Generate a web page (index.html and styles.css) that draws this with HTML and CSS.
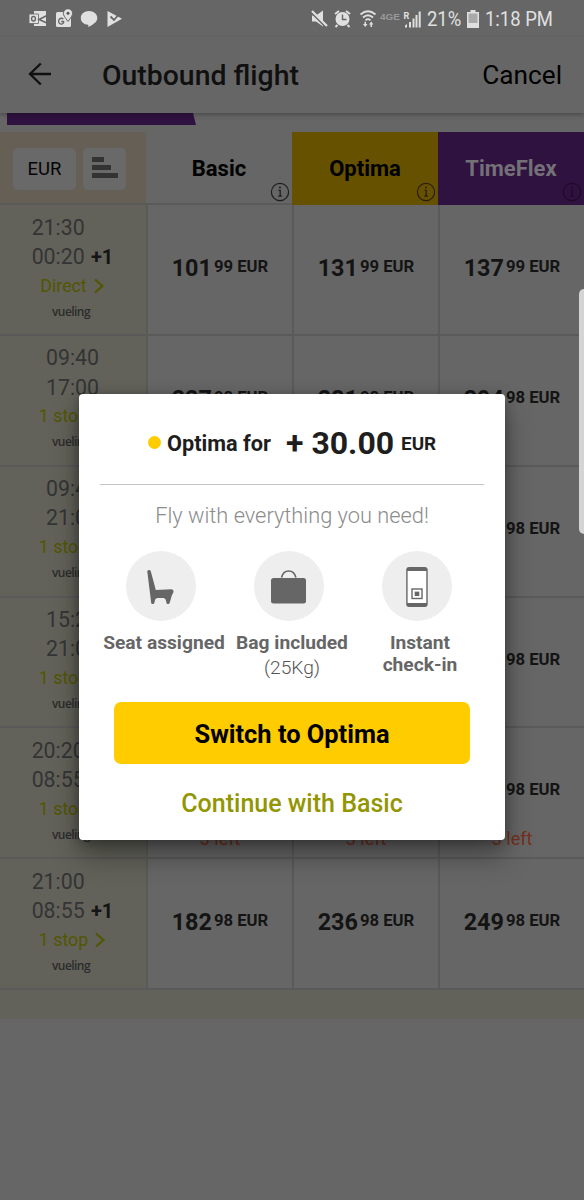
FILE: index.html
```html
<!DOCTYPE html>
<html lang="en">
<head>
<meta charset="utf-8">
<title>Outbound flight</title>
<link rel="stylesheet" href="styles.css">
</head>
<body>
<svg class="defs" aria-hidden="true">
  <symbol id="info" viewBox="0 0 20 20"><circle cx="10" cy="10" r="8.600" fill="none" stroke="currentColor" stroke-width="1.200"/><path d="M8.500 8.300h1.700v6M8.300 14.200h3.600" fill="none" stroke="currentColor" stroke-width="1.300"/><circle cx="10" cy="5.600" r="1" fill="currentColor"/></symbol>
  <symbol id="chev" viewBox="0 0 12 16"><path d="M2 1.500l7.400 6.500L2 14.500" fill="none" stroke="currentColor" stroke-width="2.300"/></symbol>
</svg>
<div class="screen">
  <div class="status">
    <svg class="status-left" width="96" height="20" viewBox="28 7 96 20" fill="#e0e0e0">
      <path d="M34 9h12v15H34z"/><path d="M29 12h9.500v9.500H29z" stroke="#666" stroke-width=".8"/><ellipse cx="33.500" cy="16.700" rx="1.900" ry="2.300" fill="none" stroke="#666" stroke-width="1.400"/><path d="M48 13l-9 4.500 9 4" fill="none" stroke="#666" stroke-width="1.500"/>
      <rect x="56" y="10" width="15" height="15" rx="1.500"/><path d="M63.300 17.200a2.700 2.900 0 1 0 .3 3.500v-1.200h-2.400" fill="none" stroke="#666" stroke-width="1.300"/><path d="M68 19.500c-3-4-4.600-6-4.600-8.200a4.600 4.600 0 0 1 9.200 0c0 2.200-1.600 4.200-4.600 8.200z" stroke="#666" stroke-width="1"/><circle cx="68" cy="11.300" r="1.500" fill="#555"/>
      <path d="M89 9c4.800 0 8.300 3.100 8.300 7 0 3.500-3.200 6.200-9 9v-2.200c-4.500-.2-7.500-3-7.500-6.800 0-3.900 3.400-7 8.200-7z"/>
      <path d="M107.500 9l14.500 7.700-14.500 8.300z"/><path d="M110.500 14.500l3.500 3.500 6-7" fill="none" stroke="#666" stroke-width="1.800"/>
    </svg>
    <svg class="status-right" width="113" height="20" viewBox="310 7 113 20" fill="#e0e0e0">
      <path d="M312 13.500h4l7-5v16l-7-5h-4z"/><path d="M310.500 9l16 16" stroke="#666" stroke-width="3"/><path d="M312 9l15 15" stroke="#e0e0e0" stroke-width="2.200"/>
      <circle cx="342.500" cy="17" r="7"/><path d="M335 12l4-3M350 12l-4-3M337.500 23l-2 2M347.500 23l2 2" stroke="#e0e0e0" stroke-width="2"/><path d="M342.500 12.500v5h4" fill="none" stroke="#666" stroke-width="1.400"/>
      <g fill="none" stroke="#e0e0e0" stroke-width="1.700"><path d="M360.500 12.500q7.500-6.500 15 0M363 15.500q5-4.500 10 0M365.500 18.300q2.500-2.400 5 0"/></g><path d="M363 22h1.500v-2.200h1.500V22h1.500l-2.200 3zM369 22.500l2.200-3 2.200 3H372V25h-1.500v-2.500z"/>
      <text x="380" y="18" class="net" textLength="20" lengthAdjust="spacingAndGlyphs">4GE</text>
      <text x="403.500" y="16.500" class="roam">R</text>
      <path d="M405 23.500l2-1.500v3.500h-2zM409 20h2v5.500h-2zM412.500 16.500h2v9h-2zM415.500 13h2v12.500h-2zM418.700 9.500h2v16h-2z"/>
    </svg>
    <span class="pct">21%</span>
    <svg class="batt" width="12" height="18" viewBox="0 0 12 18"><path d="M3.500 0h5v2H12v16H0V2h3.500z" fill="#e0e0e0"/><path d="M1.500 3.500h9v9.500h-9z" fill="#aaa"/></svg>
    <span class="clock">1:18 PM</span>
  </div>
  <div class="appbar">
    <svg class="back" width="24" height="24" viewBox="0 0 24 24"><path d="M12.800 1.500L2 12l10.800 10.500M2 12h21" fill="none" stroke="#101010" stroke-width="2.300"/></svg>
    <h1>Outbound flight</h1>
    <span class="cancel">Cancel</span>
  </div>
  <div class="progress"><div class="done"></div></div>
  <div class="heads">
    <div class="tools"><span class="cur">EUR</span><span class="sort"><i></i><i></i><i></i></span></div>
    <div class="head">Basic<svg class="info"><use href="#info"/></svg></div>
    <div class="head optima">Optima<svg class="info"><use href="#info"/></svg></div>
    <div class="head flex">TimeFlex<svg class="info"><use href="#info"/></svg></div>
  </div>
  <div class="rows">
    <div class="row">
      <div class="time"><div class="hours">21:30<br>00:20 <b>+1</b></div><div class="stop">Direct<svg><use href="#chev"/></svg></div><div class="brand">vueling<i></i></div></div>
      <div class="price">101<sup>99 EUR</sup></div><div class="price">131<sup>99 EUR</sup></div><div class="price">137<sup>99 EUR</sup></div>
    </div>
    <div class="row">
      <div class="time"><div class="hours">09:40<br>17:00</div><div class="stop">1 stop<svg><use href="#chev"/></svg></div><div class="brand">vueling<i></i></div></div>
      <div class="price">227<sup>98 EUR</sup></div><div class="price">281<sup>98 EUR</sup></div><div class="price">294<sup>98 EUR</sup></div>
    </div>
    <div class="row">
      <div class="time"><div class="hours">09:40<br>21:00</div><div class="stop">1 stop<svg><use href="#chev"/></svg></div><div class="brand">vueling<i></i></div></div>
      <div class="price">227<sup>98 EUR</sup></div><div class="price">281<sup>98 EUR</sup></div><div class="price">294<sup>98 EUR</sup></div>
    </div>
    <div class="row">
      <div class="time"><div class="hours">15:20<br>21:00</div><div class="stop">1 stop<svg><use href="#chev"/></svg></div><div class="brand">vueling<i></i></div></div>
      <div class="price">227<sup>98 EUR</sup></div><div class="price">281<sup>98 EUR</sup></div><div class="price">294<sup>98 EUR</sup></div>
    </div>
    <div class="row">
      <div class="time"><div class="hours">20:20<br>08:55 <b>+1</b></div><div class="stop">1 stop<svg><use href="#chev"/></svg></div><div class="brand">vueling<i></i></div></div>
      <div class="price">182<sup>98 EUR</sup><em>3 left</em></div><div class="price">236<sup>98 EUR</sup><em>3 left</em></div><div class="price">249<sup>98 EUR</sup><em>3 left</em></div>
    </div>
    <div class="row">
      <div class="time"><div class="hours">21:00<br>08:55 <b>+1</b></div><div class="stop">1 stop<svg><use href="#chev"/></svg></div><div class="brand">vueling<i></i></div></div>
      <div class="price">182<sup>98 EUR</sup></div><div class="price">236<sup>98 EUR</sup></div><div class="price">249<sup>98 EUR</sup></div>
    </div>
  </div>
  <div class="foot"></div>
  <div class="edge"></div>

  <div class="modal">
    <div class="offer"><i class="dot"></i><span class="what">Optima for</span><span class="amount">+ 30.00</span><span class="unit">EUR</span></div>
    <p class="tag"><span>Fly with everything you need!</span></p>
    <div class="perks">
      <div class="perk">
        <svg class="disc" viewBox="0 0 70 70"><circle cx="35" cy="35" r="35" fill="#eee"/><path d="M21.300 20.500Q21.200 19.200 22.800 18.900Q24.300 18.700 24.800 20.300L29.800 39L45.500 38.300Q48.200 38.800 47.300 41.500L45.800 44.500L43.600 52Q43.300 53 42.300 53H41.500Q40.700 53 40.600 52L39.600 48.600Q38.800 47 37.500 47H31.500Q29.700 47 29.200 48.600L28.300 52Q28 53 27 53H26.200Q25.300 53 25.200 52Z" fill="#666"/></svg>
        <strong>Seat assigned</strong>
      </div>
      <div class="perk">
        <svg class="disc" viewBox="0 0 70 70"><circle cx="35" cy="35" r="35" fill="#eee"/><rect x="17" y="27" width="35" height="25.500" rx="2.500" fill="#666"/><path d="M27.500 26.500c1-4 4-6.500 7.200-6.500s6.200 2.500 7.200 6.500" fill="none" stroke="#666" stroke-width="1.700"/></svg>
        <strong>Bag included</strong><span class="note">(25Kg)</span>
      </div>
      <div class="perk">
        <svg class="disc" viewBox="0 0 70 70"><circle cx="35" cy="35" r="35" fill="#eee"/><rect x="24.200" y="16" width="21.500" height="40" rx="3" fill="#666"/><path d="M25.600 20h18.700v32H25.600z" fill="#fff"/><rect x="30" y="38" width="10" height="9.500" fill="none" stroke="#666" stroke-width="1.400"/><path d="M32.700 40.600h4.600v4.400h-4.600z" fill="#666"/></svg>
        <strong>Instant<br>check-in</strong>
      </div>
    </div>
    <div class="switch"><span>Switch to Optima</span></div>
    <div class="cont"><span>Continue with Basic</span></div>
  </div>
</div>
</body>
</html>
```
FILE: styles.css
```css
* { box-sizing: border-box; }
body { margin: 0; font-family: Roboto, "Liberation Sans", sans-serif; }
.defs { position: absolute; width: 0; height: 0; }
.screen { position: relative; width: 584px; height: 1200px; overflow: hidden; background: #666; display: flex; flex-direction: column; }
svg { display: block; flex: none; }

.status { height: 37px; display: flex; align-items: center; padding-left: 28px; color: #e0e0e0; font-size: 20.5px; flex: none; }
.status-right { margin-left: 186px; }
.net { font: 700 9px "Liberation Sans", sans-serif; fill: #999; }
.roam { font: 700 9px Roboto, sans-serif; }
.pct, .clock { transform: scaleX(.9); transform-origin: 0 50%; white-space: nowrap; }
.pct { width: 44px; margin-left: 4px; }
.batt { margin-left: -4px; }
.clock { margin-left: 6px; }

.appbar { height: 76px; flex: none; display: flex; align-items: center; padding: 0 22px 0 28px; color: #101010; box-shadow: 0 2px 4px rgba(0,0,0,.25); position: relative; z-index: 1; }
.back { margin-bottom: 2px; }
.appbar h1 { margin: 0 0 0 50px; font-size: 28.4px; font-weight: 500; }
.cancel { margin-left: auto; font-size: 26.2px; color: #000; }
.progress { height: 19px; padding-left: 7px; flex: none; }
.done { width: 189px; height: 12px; background: #2f123f; clip-path: polygon(0 0, 186px 0, 100% 100%, 0 100%); }

.heads { height: 71px; flex: none; display: grid; grid-template-columns: 146px 146px 146px 146px; }
.tools { background: #655f55; display: flex; align-items: center; gap: 7px; padding-left: 13px; }
.cur, .sort { height: 42px; background: #696969; border-radius: 5px; }
.cur { width: 63px; font-size: 18.500px; line-height: 42px; text-align: center; color: #050505; }
.sort { width: 43px; padding: 9px 0 0 9px; display: flex; flex-direction: column; gap: 3px; }
.sort i { height: 5px; background: #333; }
.sort i:nth-child(1) { width: 12px; }
.sort i:nth-child(2) { width: 19px; }
.sort i:nth-child(3) { width: 26px; }
.head { position: relative; font-size: 22px; font-weight: 700; color: #000; text-align: center; line-height: 73px; }
.info { position: absolute; right: 2px; bottom: 3px; width: 20px; height: 20px; color: #1e1e1e; }
.optima { background: #665100; }
.optima .info { color: #2b1c14; }
.flex { background: #2f123f; color: #747078; }
.flex .info { color: #1d0c29; }

.rows { display: grid; grid-auto-rows: 130.850px; flex: none; }
.row { display: grid; grid-template-columns: 146px 146px 146px 146px; border-top: 2px solid #5a5a5a; }
.time { background: #62625a; display: flex; flex-direction: column; align-items: center; padding-top: 7.500px; }
.hours { font-size: 21.300px; line-height: 29.300px; color: #343434; font-weight: 400; white-space: nowrap; margin-right: 1px; }
.hours b { color: #151515; font-size: 20px; font-weight: 700; margin-left: 1px; }
.stop { display: flex; align-items: center; gap: 6px; height: 27px; font-size: 17.800px; color: #535600; margin-right: 1px; }
.stop svg { width: 12px; height: 16px; }
.brand { position: relative; font: 600 12px/26px "Open Sans", sans-serif; color: #2c2c2c; letter-spacing: -.55px; margin-right: 4px; }
.brand i { position: absolute; right: -3px; top: 7px; width: 1px; height: 2px; background: #7a5f10; }
.price { position: relative; border-left: 2px solid #5a5a5a; display: flex; justify-content: center; align-items: flex-start; padding-top: 48px; font-size: 23.400px; line-height: 31px; font-weight: 700; color: #141414; }
.price sup { font-size: 16.700px; line-height: 28px; vertical-align: baseline; margin-left: 2px; white-space: nowrap; }
.price em { position: absolute; top: 95px; left: 0; width: 100%; text-align: center; font: 400 18px/31px Roboto, sans-serif; color: #74301c; }
.foot { height: 31px; flex: none; background: #62625a; border-top: 2px solid #5a5a5a; }
.edge { position: absolute; left: 579px; top: 289px; width: 10px; height: 245px; border-radius: 6px; background: #d4d4d4; }

.modal { position: absolute; z-index: 2; left: 79px; top: 394px; width: 426px; height: 446px; padding: 0 21px; background: #fff; border-radius: 4px; box-shadow: 0 16px 28px rgba(0,0,0,.35), 0 2px 12px rgba(0,0,0,.3); display: flex; flex-direction: column; }
.offer { height: 91px; display: flex; align-items: center; padding: 8px 0 0 48px; border-bottom: 1px solid #c4c4c4; font-weight: 700; color: #1e1e1e; white-space: nowrap; }
.dot { width: 13px; height: 13px; border-radius: 50%; background: #fc0; margin: -2px 6px 0 0; }
.what { width: 119px; font-size: 21.700px; }
.amount { width: 115px; font-size: 32px; }
.unit { font-size: 18.900px; }
.tag { margin: 0; height: 67px; line-height: 61px; text-align: center; font-size: 21.800px; font-weight: 300; color: #8c8c8c; white-space: nowrap; }
.perks { height: 150px; display: grid; grid-template-columns: repeat(3, 128px); }
.perk { display: flex; flex-direction: column; align-items: center; text-align: center; font-size: 19.200px; line-height: 22px; color: #666; white-space: nowrap; }
.disc { width: 70px; height: 70px; margin: -1px 6px 11px 0; }
.note { font-weight: 300; line-height: 28px; color: #555; }
.switch { height: 62px; margin: 0 14px; border-radius: 7px; background: #fc0; text-align: center; font-size: 25.400px; font-weight: 700; line-height: 64px; color: #000; }
.cont { height: 76px; line-height: 80px; text-align: center; font-size: 25px; font-weight: 500; color: #929600; }
```
